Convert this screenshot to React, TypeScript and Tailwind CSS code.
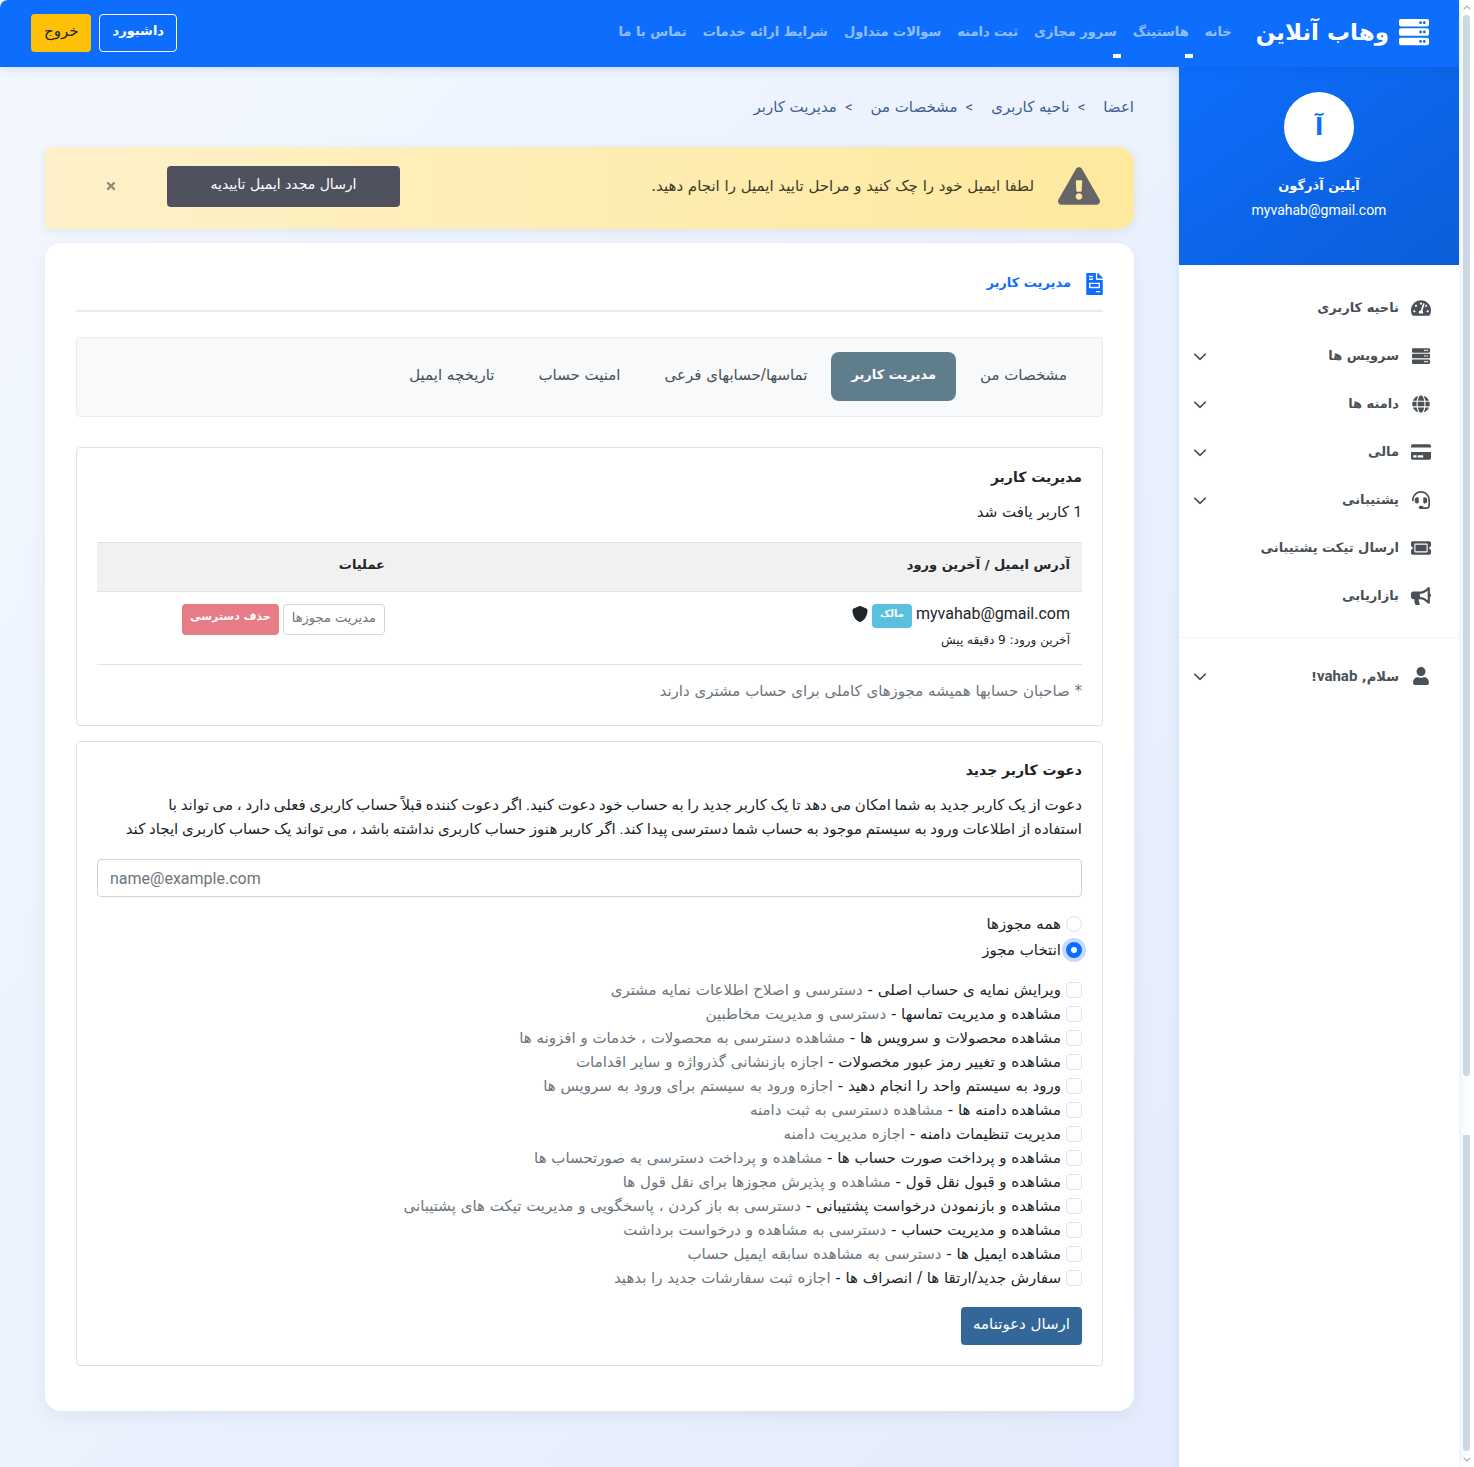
import React, { useState } from 'react';
import { FaBullhorn, FaCreditCard, FaExclamationTriangle, FaFileInvoice, FaGlobe, FaHeadset, FaServer, FaTachometerAlt, FaTicketAlt, FaTimes, FaUser } from 'react-icons/fa';
import { FaChevronDown, FaShield } from 'react-icons/fa6';
const navLinks = [{
  label: 'خانه',
  menu: false
}, {
  label: 'هاستینگ',
  menu: true
}, {
  label: 'سرور مجازی',
  menu: true
}, {
  label: 'ثبت دامنه',
  menu: false
}, {
  label: 'سوالات متداول',
  menu: false
}, {
  label: 'شرایط ارائه خدمات',
  menu: false
}, {
  label: 'تماس با ما',
  menu: false
}];
const sideLinks = [{
  label: 'ناحیه کاربری',
  icon: FaTachometerAlt,
  size: 20,
  menu: false
}, {
  label: 'سرویس ها',
  icon: FaServer,
  size: 18,
  menu: true
}, {
  label: 'دامنه ها',
  icon: FaGlobe,
  size: 18,
  menu: true
}, {
  label: 'مالی',
  icon: FaCreditCard,
  size: 20,
  menu: true
}, {
  label: 'پشتیبانی',
  icon: FaHeadset,
  size: 18,
  menu: true
}, {
  label: 'ارسال تیکت پشتیبانی',
  icon: FaTicketAlt,
  size: 20,
  menu: false
}, {
  label: 'بازاریابی',
  icon: FaBullhorn,
  size: 20,
  menu: false
}];
const crumbs = ['اعضا', 'ناحیه کاربری', 'مشخصات من', 'مدیریت کاربر'];
const tabs = ['مشخصات من', 'مدیریت کاربر', 'تماسها/حسابهای فرعی', 'امنیت حساب', 'تاریخچه ایمیل'];
const permissions = [['ویرایش نمایه ی حساب اصلی', 'دسترسی و اصلاح اطلاعات نمایه مشتری'], ['مشاهده و مدیریت تماسها', 'دسترسی و مدیریت مخاطبین'], ['مشاهده محصولات و سرویس ها', 'مشاهده دسترسی به محصولات ، خدمات و افزونه ها'], ['مشاهده و تغییر رمز عبور مخصولات', 'اجازه بازنشانی گذرواژه و سایر اقدامات'], ['ورود به سیستم واحد را انجام دهید', 'اجازه ورود به سیستم برای ورود به سرویس ها'], ['مشاهده دامنه ها', 'مشاهده دسترسی به ثبت دامنه'], ['مدیریت تنظیمات دامنه', 'اجازه مدیریت دامنه'], ['مشاهده و پرداخت صورت حساب ها', 'مشاهده و پرداخت دسترسی به صورتحساب ها'], ['مشاهده و قبول نقل قول', 'مشاهده و پذیرش مجوزها برای نقل قول ها'], ['مشاهده و بازنمودن درخواست پشتیبانی', 'دسترسی به باز کردن ، پاسخگویی و مدیریت تیکت های پشتیبانی'], ['مشاهده و مدیریت حساب', 'دسترسی به مشاهده و درخواست برداشت'], ['مشاهده ایمیل ها', 'دسترسی به مشاهده سابقه ایمیل حساب'], ['سفارش جدید/ارتقا ها / انصراف ها', 'اجازه ثبت سفارشات جدید را بدهید']];
const Header = () => {
  return <header className="relative z-20 flex h-[67px] items-center rounded-tl-lg bg-[#0d6efd] pr-[30px] pb-px pl-[31px] shadow-[0_2px_10px_rgba(0,60,140,0.15)]">
      <a href="#" className="flex items-center gap-2.5 pb-0.5 text-[23px] leading-8 font-bold text-white">
        <FaServer size={30} />
        وهاب آنلاین
      </a>
      <nav className="mr-6 flex gap-4 pb-0.5 text-[13px] leading-6 font-bold text-white/55">
        {navLinks.map(link => <a key={link.label} href="#" className="relative">
            {link.label}
            {link.menu && <span className="absolute top-[34px] -right-1 h-1 w-2 bg-white" />}
          </a>)}
      </nav>
      <div className="mr-auto flex gap-2">
        <button type="button" className="h-[38px] rounded border border-white px-3 pb-1 text-[13px] font-bold text-white">داشبورد</button>
        <button type="button" className="h-[38px] rounded bg-[#ffc107] px-[13px] pb-1 text-[15px] text-[#212529]">خروج</button>
      </div>
    </header>;
};
const Sidebar = () => {
  return <aside className="relative z-10 w-[280px] shrink-0 bg-white shadow-[0_0_10px_rgba(13,110,253,0.15)]">
      <div className="flex h-[198px] flex-col items-center bg-linear-to-br from-[#0d6efd] to-[#0b5ed7] pt-[25px] text-white">
        <div className="flex size-[70px] items-center justify-center rounded-full bg-white text-2xl leading-8 font-bold text-[#0d6efd]">آ</div>
        <p className="mt-3 text-[13px] leading-6 font-bold">آیلین آذرگون</p>
        <p className="font-[Roboto,sans-serif] text-sm leading-6">myvahab@gmail.com</p>
      </div>
      <nav className="pt-[19px] text-[13px] font-bold text-[#495057]">
        {sideLinks.map(link => <a key={link.label} href="#" className="flex h-12 items-center gap-3 pr-7 pl-[14px]">
            <span className="flex w-5 justify-center">
              <link.icon size={link.size} />
            </span>
            {link.label}
            {link.menu && <FaChevronDown size={14} className="mr-auto" />}
          </a>)}
        <div className="mt-[17px] border-t border-gray-100 pt-3.5">
          <a href="#" className="flex h-12 items-center gap-3 pr-7 pl-[14px]">
            <span className="flex w-5 justify-center">
              <FaUser size={18} />
            </span>
            <span>سلام, <span className="font-[Roboto,sans-serif] text-[15px]">vahab</span>!</span>
            <FaChevronDown size={14} className="mr-auto" />
          </a>
        </div>
      </nav>
    </aside>;
};
const VerifyAlert = () => {
  return <div className="mt-7 flex h-[82px] items-center rounded-r-2xl rounded-l bg-linear-to-l from-[#fee99d] to-[#fef1c9] pr-[34px] pb-1 pl-[60px] shadow-[0_2px_10px_rgba(0,0,0,0.08)]">
      <FaExclamationTriangle size={42} className="text-[#666]" />
      <p className="mr-6 text-[15px] text-[#3f3a2a]">لطفا ایمیل خود را چک کنید و مراحل تایید ایمیل را انجام دهید.</p>
      <button type="button" className="mr-auto h-[41px] w-[233px] rounded bg-[#50515f] pb-1 text-sm text-white">ارسال مجدد ایمیل تاییدیه</button>
      <button type="button" aria-label="بستن" className="mr-[50px] text-[#8e8878]"><FaTimes size={12} /></button>
    </div>;
};
const UsersPanel = () => {
  return <section className="mt-[30px] rounded border border-[#dee2e6] px-5 pt-[17px] pb-[22px]">
      <h3 className="text-sm leading-6 font-bold">مدیریت کاربر</h3>
      <p className="mt-[11px] text-[15px] leading-6"><span className="font-[Roboto,sans-serif]">1</span> کاربر یافت شد</p>
      <table className="mt-[18px] w-full text-right">
        <thead>
          <tr className="h-[49px] border-y border-[#dee2e6] bg-[#f1f1f1]">
            <th className="px-3 pb-1 text-[13px] font-bold">آدرس ایمیل / آخرین ورود</th>
            <th className="w-[300px] px-3 pb-1 text-[13px] font-bold">عملیات</th>
          </tr>
        </thead>
        <tbody>
          <tr className="h-[73px] border-b border-[#dee2e6] align-top">
            <td className="px-3 pt-2.5">
              <div className="flex h-6 items-center gap-1">
                <span className="font-[Roboto,sans-serif]">myvahab@gmail.com</span>
                <span className="mt-1 h-6 rounded bg-[#5bc0de] px-2 text-[10px] leading-5 font-bold text-white">مالک</span>
                <FaShield size={16} />
              </div>
              <p className="mt-0.5 text-xs leading-6">آخرین ورود: 9 دقیقه پیش</p>
            </td>
            <td className="px-3 pt-3">
              <div className="flex gap-1">
                <button type="button" className="h-[31px] rounded-sm border border-[#ced4da] px-2 pb-1 text-[13px] text-[#6c757d]">مدیریت مجوزها</button>
                <button type="button" className="h-[31px] rounded-sm bg-[#e77c87] px-2 pb-1 text-[11px] font-bold text-white">حذف دسترسی</button>
              </div>
            </td>
          </tr>
        </tbody>
      </table>
      <p className="mt-3.5 text-[15px] leading-6 text-[#6c757d]">* صاحبان حسابها همیشه مجوزهای کاملی برای حساب مشتری دارند</p>
    </section>;
};
const InvitePanel = () => {
  const [scope, setScope] = useState<'all' | 'choose'>('choose');
  const radio = 'm-0 size-4 appearance-none rounded-full border border-[#dee2e6] bg-white checked:border-[5px] checked:border-[#0d6efd] checked:ring-4 checked:ring-[#0d6efd]/25';
  return <section className="mt-[15px] rounded border border-[#dee2e6] px-5 pt-4 pb-5">
      <h3 className="text-sm leading-6 font-bold">دعوت کاربر جدید</h3>
      <p className="mt-[11px] font-[Roboto,'DejaVu_Sans',sans-serif] text-[15px] leading-6">
        دعوت از یک کاربر جدید به شما امکان می دهد تا یک کاربر جدید را به حساب خود دعوت کنید. اگر دعوت کننده قبلاً حساب کاربری فعلی دارد ، می تواند با
        <br />
        استفاده از اطلاعات ورود به سیستم موجود به حساب شما دسترسی پیدا کند. اگر کاربر هنوز حساب کاربری نداشته باشد ، می تواند یک حساب کاربری ایجاد کند
      </p>
      <form onSubmit={e => e.preventDefault()}>
        <input type="email" dir="ltr" aria-label="ایمیل" placeholder="name@example.com" className="mt-[18px] h-[38px] w-full rounded border border-[#ced4da] px-3 font-[Roboto,sans-serif] text-base placeholder:text-[#6c757d]" />
        <div className="mt-3.5 text-[15px]">
          <label className="flex h-[26px] items-center gap-[5px]">
            <input type="radio" name="scope" checked={scope === 'all'} onChange={() => setScope('all')} className={radio} />
            همه مجوزها
          </label>
          <label className="flex h-[26px] items-center gap-[5px]">
            <input type="radio" name="scope" checked={scope === 'choose'} onChange={() => setScope('choose')} className={radio} />
            انتخاب مجوز
          </label>
        </div>
        <div className="mt-[15px] text-[15px]">
          {permissions.map(([name, description]) => <label key={name} className="flex h-6 items-center gap-[5px]">
              <input type="checkbox" className="m-0 size-4 shrink-0 appearance-none rounded border border-[#dee2e6] bg-white checked:border-[#0d6efd] checked:bg-[#0d6efd]" />
              <span>
                {name} - <span className="text-[#6c757d]">{description}</span>
              </span>
            </label>)}
        </div>
        <button type="submit" className="mt-[17px] h-[38px] rounded bg-[#336699] px-3 pb-1 text-[15px] text-white">ارسال دعوتنامه</button>
      </form>
    </section>;
};
// Page scroll track shown at the window edge
const ScrollRail = () => {
  return <div className="flex w-[15px] shrink-0 flex-col items-center bg-white py-1 text-[#9a9a9a]">
      <FaChevronDown size={8} className="rotate-180" />
      <div className="mt-[3px] w-[7px] flex-[1063] rounded-full bg-[#d0dae3]" />
      <div className="h-[59px]" />
      <div className="mb-1 w-[7px] flex-[316] rounded-b-full bg-[#d0dae3]" />
      <FaChevronDown size={8} />
    </div>;
};
const App = () => {
  return <div dir="rtl" className="flex min-h-screen bg-white font-['DejaVu_Sans',sans-serif] text-[#212529]">
      <ScrollRail />
      <div className="flex min-w-0 flex-1 flex-col">
        <Header />
        <div className="flex flex-1">
          <Sidebar />
          <main className="min-w-0 flex-1 bg-linear-to-br from-[#f3f8ff] to-[#e4ecfd] px-[45px] pt-7 pb-14">
            <nav className="flex h-6 items-center text-[15px] text-[#3f5f8f]">
              {crumbs.map((crumb, i) => <React.Fragment key={crumb}>
                  {i > 0 && <span className="mr-[18px] ml-2 font-[Roboto,sans-serif]">&gt;</span>}
                  <a href="#">{crumb}</a>
                </React.Fragment>)}
            </nav>
            <VerifyAlert />
            <div className="mt-3.5 rounded-2xl bg-white px-[31px] pt-[25px] pb-[45px] shadow-[0_5px_20px_rgba(0,0,0,0.06)]">
              <div className="flex h-11 items-start gap-[15px] border-b-2 border-[#e9ecef] text-[13px] leading-[30px] font-bold text-[#0d6efd]">
                <FaFileInvoice className="mt-[5px] h-[22px] w-[17px]" />
                <h2>مدیریت کاربر</h2>
              </div>
              <nav className="mt-[25px] flex h-20 items-center gap-1 rounded border border-[#e9ecef] bg-[#f8f9fa] px-[15px] pb-0.5 text-[15px] text-[#495057]">
                {tabs.map(tab => <a key={tab} href="#" className={tab === 'مدیریت کاربر' ? 'flex h-[49px] items-center rounded-lg bg-[#607d8b] px-5 pb-0.5 text-[13px] font-bold text-white' : 'flex h-[49px] items-center px-5 pb-0.5'}>{tab}</a>)}
              </nav>
              <UsersPanel />
              <InvitePanel />
            </div>
          </main>
        </div>
      </div>
    </div>;
};
export default App;
